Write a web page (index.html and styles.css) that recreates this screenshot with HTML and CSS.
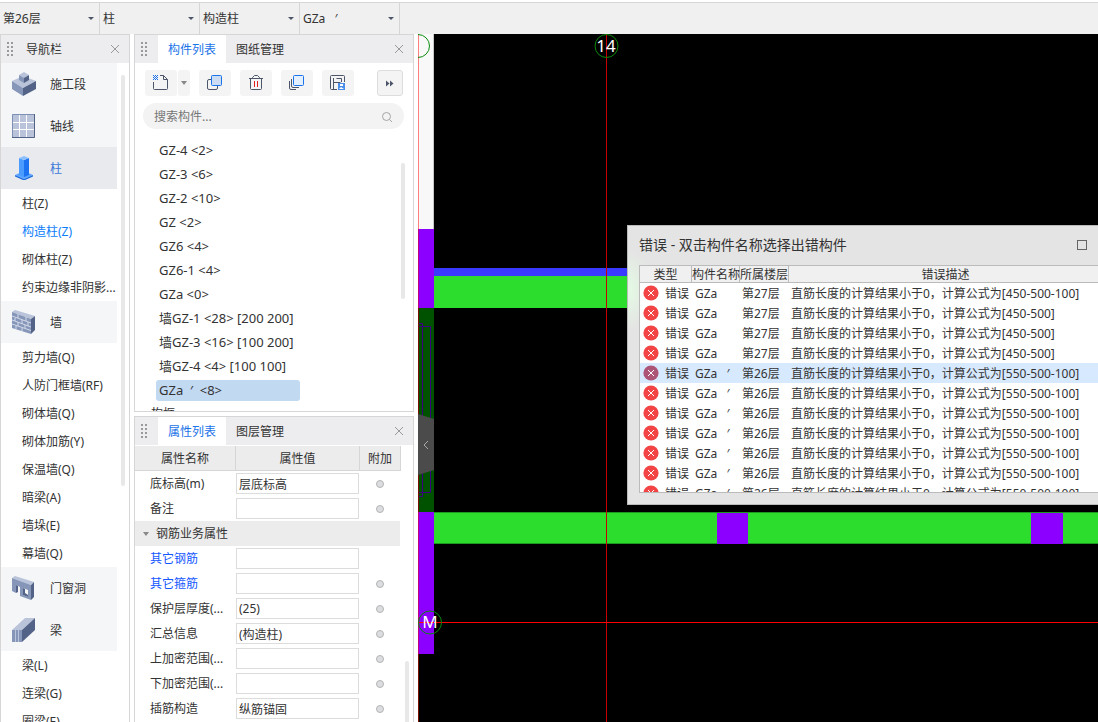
FILE: index.html
```html
<!DOCTYPE html>
<html lang="zh-CN">
<head>
    <meta charset="UTF-8">
    <meta name="viewport" content="width=device-width, initial-scale=1.0">
    <title>构造柱</title>
    <link rel="stylesheet" href="styles.css">
</head>
<body>
    <svg class="defs" aria-hidden="true">
        <symbol id="grip" viewBox="0 0 7 14">
            <path d="M0 0h2v2H0zM4 0h2v2H4zM0 4h2v2H0zM4 4h2v2H4zM0 8h2v2H0zM4 8h2v2H4zM0 12h2v2H0zM4 12h2v2H4z" fill="#999"/>
        </symbol>
        <symbol id="close" viewBox="0 0 10 10">
            <path d="M1 1l8 8M9 1l-8 8" stroke="#999" fill="none"/>
        </symbol>
        <symbol id="error" viewBox="0 0 16 16">
            <circle cx="8" cy="8" r="7.6" fill="currentColor"/>
            <path d="M5 5l6 6M11 5l-6 6" stroke="#fff" fill="none"/>
        </symbol>
    </svg>

    <div class="topbar">
        <div class="combo"><select aria-label="楼层"><option>第26层</option></select></div>
        <div class="combo"><select aria-label="构件类型"><option>柱</option></select></div>
        <div class="combo"><select aria-label="构件子类"><option>构造柱</option></select></div>
        <div class="combo"><select aria-label="构件"><option>GZa&nbsp;&nbsp;&nbsp;′</option></select></div>
    </div>

    <div class="main">
        <!-- 导航栏 -->
        <nav class="panel nav">
            <div class="panel-head">
                <svg class="grip"><use href="#grip"/></svg>
                <span class="title">导航栏</span>
                <button class="close" aria-label="关闭"><svg><use href="#close"/></svg></button>
            </div>
            <div class="nav-body">
                <div class="nav-list">
                    <a class="group" href="#">
                        <svg viewBox="0 0 24 24">
                            <path d="M0 9l11-5 13 5-13 7z" fill="#b9c3d9"/>
                            <path d="M0 9l11 7v8L0 17z" fill="#8696b8"/>
                            <path d="M24 9l-13 7v8l13-7z" fill="#536388"/>
                            <path d="M7 3l5-3 5 3-5 3z" fill="#b9c3d9"/>
                            <path d="M7 3l5 3v5L7 8z" fill="#8696b8"/>
                            <path d="M17 3l-5 3v5l5-3z" fill="#536388"/>
                        </svg>施工段</a>
                    <a class="group" href="#">
                        <svg viewBox="0 0 24 24">
                            <path d="M0 0h23v24H0z" fill="#b9c3d9"/>
                            <path d="M.5 24V.5H23" stroke="#7f90b5" fill="none"/>
                            <path d="M22.5 0v23.5H0" stroke="#536388" fill="none"/>
                            <path d="M7.5 1v22M14.5 1v22M1 8.5h21M1 15.5h21" stroke="#fff" fill="none"/>
                        </svg>轴线</a>
                    <a class="group on" href="#">
                        <svg viewBox="0 0 24 24">
                            <path d="M3 19l9-4 9 4-9 4z" fill="#5aa5ff"/>
                            <path d="M3 19l9 4 9-4v1.5L12 24.5 3 20.5z" fill="#1b6ce0"/>
                            <path d="M7 2l5 2v17l-5-2z" fill="#4c9cff"/>
                            <path d="M17 2l-5 2v17l5-2z" fill="#1c72f0"/>
                            <path d="M7 2l5-2 5 2-5 2z" fill="#8cc0ff"/>
                        </svg>柱</a>
                    <a class="sub" href="#">柱(Z)</a>
                    <a class="sub on" href="#">构造柱(Z)</a>
                    <a class="sub" href="#">砌体柱(Z)</a>
                    <a class="sub" href="#">约束边缘非阴影...</a>
                    <a class="group" href="#">
                        <svg viewBox="0 0 24 24">
                            <path d="M0 2l3-2 20 6-4 3z" fill="#b9c3d9"/>
                            <path d="M0 2l19 7v15L0 18z" fill="#8696b8"/>
                            <path d="M19 9l4-3v14l-4 4z" fill="#536388"/>
                            <path d="M0 6l19 7M0 10l19 7M0 14l19 6.5M6 4v4M14 7v4M3 8v3M10 10v4M16 12v4M6 12v4M13 15v3M4 16v3M10 18v3" stroke="#d3daea" fill="none"/>
                        </svg>墙</a>
                    <a class="sub" href="#">剪力墙(Q)</a>
                    <a class="sub" href="#">人防门框墙(RF)</a>
                    <a class="sub" href="#">砌体墙(Q)</a>
                    <a class="sub" href="#">砌体加筋(Y)</a>
                    <a class="sub" href="#">保温墙(Q)</a>
                    <a class="sub" href="#">暗梁(A)</a>
                    <a class="sub" href="#">墙垛(E)</a>
                    <a class="sub" href="#">幕墙(Q)</a>
                    <a class="group" href="#">
                        <svg viewBox="0 0 24 24">
                            <path d="M0 2l3-2 19 6-3 3z" fill="#b9c3d9"/>
                            <path d="M0 2l19 7v15L8 20v-9L4 9v8l-4-2zM11 12v7l5 2v-7z" fill="#8696b8" fill-rule="evenodd"/>
                            <path d="M19 9l3-3v15l-3 3zM4 9l2 1v6l-2 1zM11 12l2 1v4l3 2v2l-5-2z" fill="#536388"/>
                        </svg>门窗洞</a>
                    <a class="group" href="#">
                        <svg viewBox="0 0 24 24">
                            <path d="M0 12L13 0h10L10 12z" fill="#b9c3d9"/>
                            <path d="M0 12h10v12H0z" fill="#8696b8"/>
                            <path d="M10 12L23 0v12L10 24z" fill="#536388"/>
                            <path d="M3.5 12v12M6.5 12v12" stroke="#b9c3d9" fill="none"/>
                        </svg>梁</a>
                    <a class="sub" href="#">梁(L)</a>
                    <a class="sub" href="#">连梁(G)</a>
                    <a class="sub" href="#">圈梁(E)</a>
                </div>
                <div class="nav-bar"></div>
            </div>
        </nav>

        <div class="side">
            <!-- 构件列表 -->
            <section class="panel members">
                <div class="panel-head">
                    <svg class="grip"><use href="#grip"/></svg>
                    <button class="tab on">构件列表</button>
                    <button class="tab">图纸管理</button>
                    <button class="close" aria-label="关闭"><svg><use href="#close"/></svg></button>
                </div>
                <div class="tools">
                    <div class="split">
                        <button class="tool" aria-label="新建">
                            <svg viewBox="0 0 18 18" fill="none">
                                <path d="M1.5 8v6.5q0 1 1 1h12q1 0 1-1V5.5l-4-4H8" stroke="#4d5569"/>
                                <path d="M11.5 1.5v4h4" stroke="#4d5569"/>
                                <path d="M1 1h1v1H1zM3 1h1v1H3zM5 1h1v1H5zM2 2h1v1H2zM4 2h1v1H4zM1 3h1v1H1zM3 3h1v1H3zM5 3h1v1H5zM2 4h1v1H2zM4 4h1v1H4zM1 5h1v1H1zM3 5h1v1H3zM5 5h1v1H5z" fill="#1a73e8"/>
                            </svg>
                        </button>
                        <button class="tool more" aria-label="新建选项"><i class="tri"></i></button>
                    </div>
                    <button class="tool" aria-label="复制">
                        <svg viewBox="0 0 18 18" fill="none">
                            <rect x="1.5" y="5.5" width="10" height="10" rx="1.5" stroke="#4d5569"/>
                            <rect x="5.5" y="1.5" width="10" height="10" rx="1" stroke="#1a73e8" fill="#cbdcf3"/>
                        </svg>
                    </button>
                    <button class="tool" aria-label="删除">
                        <svg viewBox="0 0 18 18" fill="none">
                            <path d="M2 4.5h14M3.500 4.5v10q0 1 1 1h9q1 0 1-1v-10M5.5 4V3.5l2-2h3l2 2V4" stroke="#4d5569"/>
                            <path d="M7.5 7v6M10.5 7v6" stroke="#e02020"/>
                        </svg>
                    </button>
                    <button class="tool" aria-label="层间复制">
                        <svg viewBox="0 0 18 18" fill="none">
                            <path d="M1.5 7v7q0 1.500 1.500 1.500h5M3.500 5v7q0 1.500 1.500 1.500h6" stroke="#4d5569"/>
                            <rect x="5.5" y="1.5" width="10" height="10" rx="1" stroke="#1a73e8" fill="#e4f0ff"/>
                        </svg>
                    </button>
                    <button class="tool" aria-label="存档">
                        <svg viewBox="0 0 18 18" fill="none">
                            <path d="M8 15.5H2.5q-1 0-1-1v-12q0-1 1-1h12q1 0 1 1V8M4.5 4v11M4.5 8.5h7M7.500 4.5h5V8" stroke="#4d5569"/>
                            <path d="M9 9h7v7H9z" fill="#4a90e8"/>
                            <path d="M11 10h3v2h-3zM10 15l2-2 3 2z" fill="#fff"/>
                        </svg>
                    </button>
                    <button class="tool expand" aria-label="更多">
                        <svg viewBox="0 0 18 18"><path d="M5 6.5l3.500 3L5 12.500zM9 6.5l3.500 3-3.500 3z" fill="#4d5569"/></svg>
                    </button>
                </div>
                <div class="search">
                    <input type="text" placeholder="搜索构件..." aria-label="搜索构件">
                    <svg viewBox="0 0 12 12" fill="none" stroke="#a5a5a5"><circle cx="5.5" cy="5.5" r="4"/><path d="M8.5 8.5l2.500 2.500"/></svg>
                </div>
                <div class="list-box">
                    <ul class="list">
                        <li><a href="#">GZ-4 &lt;2&gt;</a></li>
                        <li><a href="#">GZ-3 &lt;6&gt;</a></li>
                        <li><a href="#">GZ-2 &lt;10&gt;</a></li>
                        <li><a href="#">GZ &lt;2&gt;</a></li>
                        <li><a href="#">GZ6 &lt;4&gt;</a></li>
                        <li><a href="#">GZ6-1 &lt;4&gt;</a></li>
                        <li><a href="#">GZa &lt;0&gt;</a></li>
                        <li><a href="#">墙GZ-1 &lt;28&gt; [200 200]</a></li>
                        <li><a href="#">墙GZ-3 &lt;16&gt; [100 200]</a></li>
                        <li><a href="#">墙GZ-4 &lt;4&gt; [100 100]</a></li>
                        <li><a class="on" href="#">GZa&nbsp;&nbsp;′&nbsp; &lt;8&gt;</a></li>
                        <li class="parent"><a href="#">构框</a></li>
                    </ul>
                    <div class="list-bar"></div>
                </div>
            </section>

            <!-- 属性列表 -->
            <section class="panel props">
                <div class="panel-head">
                    <svg class="grip"><use href="#grip"/></svg>
                    <button class="tab on">属性列表</button>
                    <button class="tab">图层管理</button>
                    <button class="close" aria-label="关闭"><svg><use href="#close"/></svg></button>
                </div>
                <div class="props-body">
                    <table class="props-table">
                        <thead>
                            <tr><th class="c-name">属性名称</th><th>属性值</th><th class="c-add">附加</th></tr>
                        </thead>
                        <tbody>
                            <tr><td><label for="p1">底标高(m)</label></td><td><input type="text" id="p1" value="层底标高"></td><td><input type="checkbox" aria-label="附加 底标高"></td></tr>
                            <tr><td><label for="p2">备注</label></td><td><input type="text" id="p2"></td><td><input type="checkbox" aria-label="附加 备注"></td></tr>
                            <tr class="section"><td colspan="3"><i class="tri"></i>钢筋业务属性</td></tr>
                            <tr class="blue"><td><label for="p3">其它钢筋</label></td><td><input type="text" id="p3"></td><td></td></tr>
                            <tr class="blue"><td><label for="p4">其它箍筋</label></td><td><input type="text" id="p4"></td><td><input type="checkbox" aria-label="附加 其它箍筋"></td></tr>
                            <tr><td><label for="p5">保护层厚度(...</label></td><td><input type="text" id="p5" value="(25)"></td><td><input type="checkbox" aria-label="附加 保护层厚度"></td></tr>
                            <tr><td><label for="p6">汇总信息</label></td><td><input type="text" id="p6" value="(构造柱)"></td><td><input type="checkbox" aria-label="附加 汇总信息"></td></tr>
                            <tr><td><label for="p7">上加密范围(...</label></td><td><input type="text" id="p7"></td><td><input type="checkbox" aria-label="附加 上加密范围"></td></tr>
                            <tr><td><label for="p8">下加密范围(...</label></td><td><input type="text" id="p8"></td><td><input type="checkbox" aria-label="附加 下加密范围"></td></tr>
                            <tr><td><label for="p9">插筋构造</label></td><td><input type="text" id="p9" value="纵筋锚固"></td><td><input type="checkbox" aria-label="附加 插筋构造"></td></tr>
                        </tbody>
                    </table>
                    <div class="props-bar"></div>
                </div>
            </section>
        </div>

        <!-- 绘图区 -->
        <div class="canvas">
            <svg class="drawing">
                <rect x="0" y="0" width="16" height="195" fill="#f8f8f8"/>
                <path d="M15.5 0v195" stroke="#c8c8c8"/>
                <rect x="0" y="195" width="16" height="79" fill="#8b00ff"/>
                <rect x="0" y="274" width="16" height="204" fill="#005200"/>
                <rect x="0" y="478" width="16" height="142" fill="#8b00ff"/>
                <path d="M0 289.5h4.5v173H0M0 292.5h12.5v166H0" stroke="#3c0082" fill="none"/>
                <rect x="16" y="234" width="100%" height="8" fill="#3a3aff"/>
                <rect x="16" y="242" width="100%" height="32" fill="#2ddd2d"/>
                <rect x="16" y="478" width="100%" height="32" fill="#2ddd2d"/>
                <line x1="16" y1="478.5" x2="100%" y2="478.5" stroke="#1d9a1d"/>
                <line x1="16" y1="509.5" x2="100%" y2="509.5" stroke="#1d9a1d"/>
                <rect x="299" y="479" width="31" height="31" fill="#8b00ff"/>
                <rect x="613" y="479" width="32" height="31" fill="#8b00ff"/>
                <path d="M.5 0v195" stroke="#ff8080"/>
                <path d="M.5 195v79M.5 478v142" stroke="#c00080"/>
                <path d="M.5 274v204M.5 620v400" stroke="#7a1000"/>
                <line x1="188.5" y1="0" x2="188.5" y2="100%" stroke="#c80000"/>
                <line x1="0" y1="588.5" x2="100%" y2="588.5" stroke="#ff0000"/>
                <g fill="none" stroke="#0a8a0a">
                    <circle cx="0" cy="12" r="11.5"/>
                    <circle cx="188.5" cy="12" r="11.5"/>
                    <circle cx="12" cy="588.5" r="11.5"/>
                </g>
                <text x="188" y="18">14</text>
                <text x="12" y="594">M</text>
            </svg>
            <button class="handle" aria-label="收起">
                <svg viewBox="0 0 6 10"><path d="M5 1L1 5l4 4" stroke="#aaa" fill="none"/></svg>
            </button>

            <div class="dialog">
                <div class="dialog-head">
                    <span>错误 - 双击构件名称选择出错构件</span>
                    <button class="max" aria-label="最大化"></button>
                </div>
                <div class="dialog-body">
                    <table class="errors">
                        <thead>
                            <tr><th class="c-type">类型</th><th class="c-member">构件名称</th><th class="c-floor">所属楼层</th><th>错误描述</th></tr>
                        </thead>
                        <tbody>
                            <tr><td><svg><use href="#error"/></svg>错误</td><td>GZa</td><td>第27层</td><td>直筋长度的计算结果小于0，计算公式为[450-500-100]</td></tr>
                            <tr><td><svg><use href="#error"/></svg>错误</td><td>GZa</td><td>第27层</td><td>直筋长度的计算结果小于0，计算公式为[450-500]</td></tr>
                            <tr><td><svg><use href="#error"/></svg>错误</td><td>GZa</td><td>第27层</td><td>直筋长度的计算结果小于0，计算公式为[450-500]</td></tr>
                            <tr><td><svg><use href="#error"/></svg>错误</td><td>GZa</td><td>第27层</td><td>直筋长度的计算结果小于0，计算公式为[450-500]</td></tr>
                            <tr class="on"><td><svg><use href="#error"/></svg>错误</td><td>GZa&nbsp;&nbsp;&nbsp;′</td><td>第26层</td><td>直筋长度的计算结果小于0，计算公式为[550-500-100]</td></tr>
                            <tr><td><svg><use href="#error"/></svg>错误</td><td>GZa&nbsp;&nbsp;&nbsp;′</td><td>第26层</td><td>直筋长度的计算结果小于0，计算公式为[550-500-100]</td></tr>
                            <tr><td><svg><use href="#error"/></svg>错误</td><td>GZa&nbsp;&nbsp;&nbsp;′</td><td>第26层</td><td>直筋长度的计算结果小于0，计算公式为[550-500-100]</td></tr>
                            <tr><td><svg><use href="#error"/></svg>错误</td><td>GZa&nbsp;&nbsp;&nbsp;′</td><td>第26层</td><td>直筋长度的计算结果小于0，计算公式为[550-500-100]</td></tr>
                            <tr><td><svg><use href="#error"/></svg>错误</td><td>GZa&nbsp;&nbsp;&nbsp;′</td><td>第26层</td><td>直筋长度的计算结果小于0，计算公式为[550-500-100]</td></tr>
                            <tr><td><svg><use href="#error"/></svg>错误</td><td>GZa&nbsp;&nbsp;&nbsp;′</td><td>第26层</td><td>直筋长度的计算结果小于0，计算公式为[550-500-100]</td></tr>
                            <tr><td><svg><use href="#error"/></svg>错误</td><td>GZa&nbsp;&nbsp;&nbsp;′</td><td>第26层</td><td>直筋长度的计算结果小于0，计算公式为[550-500-100]</td></tr>
                        </tbody>
                    </table>
                </div>
            </div>
        </div>
    </div>
</body>
</html>
```

FILE: styles.css
```css
* {box-sizing: border-box;}
body, ul, li, table, button, input {margin: 0; padding: 0;}
body {
    height: 100vh;
    display: flex;
    flex-direction: column;
    overflow: hidden;
    background: #fff;
    color: #333;
    font: 12px/20px "Noto Sans", "Noto Sans CJK SC", sans-serif;
}
button, input, select {font: inherit; color: inherit; border: none; background: none;}
a {color: inherit; text-decoration: none;}
ul {list-style: none;}
svg {display: block; flex: none;}
.defs {position: absolute; width: 0; height: 0;}
.tri {
    display: block;
    border: 3px solid transparent;
    border-top: 4px solid #888;
    border-bottom: 0;
}

/* 顶部下拉 */
.topbar {
    flex: none;
    display: flex;
    height: 32px;
    margin-top: 2px;
    border-top: 1px solid #d6d6d6;
    background: #f0f0f0;
}
.combo {
    position: relative;
    width: 100px;
    border-right: 1px solid #d6d6d6;
}
.combo select {
    appearance: none;
    width: 100%;
    height: 100%;
    padding-left: 3px;
}
.combo::after {
    content: "";
    position: absolute;
    right: 5px;
    top: 14px;
    border: 3px solid transparent;
    border-top: 3px solid #4d5569;
    border-bottom: 0;
    pointer-events: none;
}

.main {
    flex: 1;
    min-height: 0;
    display: flex;
    gap: 4px;
}

/* 面板 */
.panel {
    border: 1px solid #d6d6d6;
    background: #fff;
    overflow: hidden;
}
.panel-head {
    flex: none;
    display: flex;
    align-items: center;
    height: 28px;
    padding: 0 8px 0 6px;
    background: #ededf0;
}
.panel-head .grip {width: 7px; height: 14px; margin-right: 10px;}
.panel-head .title {margin-left: 2px; padding-top: 2px;}
.tab {height: 28px; padding: 2px 10px 0;}
.tab.on {background: #fff; color: #1a73e8;}
.close {margin-left: auto; padding: 1px;}
.close svg {width: 10px; height: 10px;}

/* 导航栏 */
.nav {
    flex: none;
    width: 130px;
    display: flex;
    flex-direction: column;
    border-bottom: none;
}
.nav-body {
    flex: 1;
    min-height: 0;
    display: flex;
    gap: 4px;
}
.nav-list {width: 116px; overflow: hidden;}
.nav-list a {
    display: flex;
    align-items: center;
    padding-top: 2px;
    white-space: nowrap;
}
.nav-list .group {
    height: 42px;
    padding-left: 11px;
    gap: 14px;
    background: #f5f6f8;
}
.nav-list .group svg {width: 24px; height: 24px; margin-bottom: 2px;}
.nav-list .group.on {background: #e9eaee; color: #3b78d8;}
.nav-list .sub {height: 28px; padding-left: 21px;}
.nav-list .sub.on {color: #0d7dfa;}
.nav-bar {
    width: 4px;
    height: 411px;
    margin-top: 12px;
    border-radius: 2px;
    background: #e8e8e8;
}

.side {
    flex: none;
    width: 280px;
    display: flex;
    flex-direction: column;
    gap: 4px;
}

/* 构件列表 */
.members {
    flex: none;
    height: 378px;
    display: flex;
    flex-direction: column;
}
.tools {display: flex; gap: 9px; padding: 7px 10px 0;}
.split {display: flex; gap: 1px;}
.tool {
    width: 32px;
    height: 26px;
    display: flex;
    align-items: center;
    justify-content: center;
    border-radius: 3px;
    background: #f4f4f4;
}
.tool svg {width: 18px; height: 18px;}
.tool.more {width: 12px;}
.tool.expand {
    width: 26px;
    margin-left: auto;
    border: 1px solid #ddd;
}
.search {
    display: flex;
    align-items: center;
    height: 26px;
    margin: 7px 9px 0 8px;
    padding: 0 11px;
    border-radius: 13px;
    background: #f3f3f3;
}
.search input {flex: 1; min-width: 0; padding-top: 2px;}
.search input::placeholder {color: #777; opacity: 1;}
.search svg {width: 12px; height: 12px; margin-top: 2px;}
.list-box {
    flex: 1;
    min-height: 0;
    display: flex;
    justify-content: space-between;
    padding: 9px 8px 0 21px;
}
.list {width: 144px; font-size: 13px;}
.list li {height: 24px; padding: 2px 0 1px;}
.list a {
    display: block;
    height: 21px;
    line-height: 20px;
    padding-left: 3px;
    border-radius: 3px;
    white-space: nowrap;
}
.list a.on {background: #c2d9f2;}
.list .parent a {padding-left: 0; margin-left: -5px; font-size: 12px;}
.list-bar {
    width: 4px;
    height: 136px;
    margin-top: 25px;
    border-radius: 2px;
    background: #e8e8e8;
}

/* 属性列表 */
.props {
    flex: 1;
    min-height: 0;
    display: flex;
    flex-direction: column;
    border-bottom: none;
}
.props-body {
    flex: 1;
    min-height: 0;
    display: flex;
    justify-content: space-between;
    padding: 1px 4px 0 0;
}
.props-table {
    width: 266px;
    height: 1px;
    table-layout: fixed;
    border-collapse: separate;
    border-spacing: 0;
}
.props-table th {
    height: 25px;
    padding: 2px 0 0;
    font-weight: normal;
    background: #ececec;
    border-right: 1px solid #d6d6d6;
    border-bottom: 1px solid #d6d6d6;
}
.props-table .c-name {width: 101px;}
.props-table .c-add {width: 41px;}
.props-table td {height: 25px; padding: 0; white-space: nowrap;}
.props-table td:first-child {padding-left: 15px;}
.props-table td:last-child {padding-right: 2px;}
.props-table .section td {
    display: flex;
    align-items: center;
    gap: 7px;
    width: 265px;
    padding-left: 8px;
    background: #ececec;
}
.props-table .blue label {color: #1557ff;}
.props-table input[type=text] {
    display: block;
    width: 123px;
    height: 21px;
    padding: 0 2px;
    border: 1px solid #dcdcdc;
    background: #fff;
}
.props-table input[type=checkbox] {
    appearance: none;
    display: block;
    width: 8px;
    height: 8px;
    margin: 0 auto;
    border: 1px solid #b4b4b4;
    border-radius: 50%;
    background: #dcdde0;
}
.props-bar {
    width: 4px;
    margin-top: 215px;
    border-radius: 2px 2px 0 0;
    background: #e8e8e8;
}

/* 绘图区 */
.canvas {
    position: relative;
    flex: 1;
    min-width: 0;
    overflow: hidden;
    background: #000;
}
.drawing {position: absolute; width: 100%; height: 100%;}
.drawing text {
    fill: #fff;
    font-size: 17px;
    text-anchor: middle;
}
.handle {
    position: absolute;
    left: 0;
    top: 380px;
    width: 16px;
    height: 61px;
    display: flex;
    align-items: center;
    justify-content: center;
    background: #4b4b4b;
    clip-path: polygon(0 0, 100% 5px, 100% 56px, 0 100%);
}
.handle svg {width: 6px; height: 10px;}

/* 错误窗口 */
.dialog {
    position: absolute;
    left: 209px;
    right: -18px;
    top: 191px;
    height: 280px;
    display: flex;
    flex-direction: column;
    padding: 0 11px 11px;
    border: 1px solid #bbb;
    background: radial-gradient(ellipse 24px 40px at 0 64px, #e4fbe4, transparent), #e4e4e4;
}
.dialog-head {
    flex: none;
    display: flex;
    align-items: center;
    justify-content: space-between;
    height: 39px;
    padding: 0 17px 2px 0;
    font-size: 14px;
}
.max {width: 10px; height: 10px; border: 1px solid #666;}
.dialog-body {
    flex: 1;
    min-height: 0;
    overflow: hidden;
    border: 1px solid #bbb;
    background: #fff;
}
.errors {
    width: 100%;
    table-layout: fixed;
    border-collapse: separate;
    border-spacing: 0;
}
.errors th {
    height: 17px;
    padding: 2px 0 0;
    line-height: 14px;
    font-weight: normal;
    white-space: nowrap;
    background: #f0f0f0;
    border-right: 1px solid #bbb;
    border-bottom: 1px solid #bbb;
}
.errors .c-type {width: 52px;}
.errors .c-member {width: 48px;}
.errors .c-floor {width: 49px;}
.errors td {
    height: 20px;
    padding: 2px 0 0 3px;
    line-height: 18px;
    white-space: nowrap;
}
.errors td + td + td {padding-left: 2px;}
.errors td svg {
    display: inline-block;
    width: 16px;
    height: 16px;
    margin-right: 6px;
    vertical-align: top;
    color: #f24444;
}
.errors tr.on td {background: #d6e9ff;}
.errors tr.on svg {color: #ad5577;}
```
